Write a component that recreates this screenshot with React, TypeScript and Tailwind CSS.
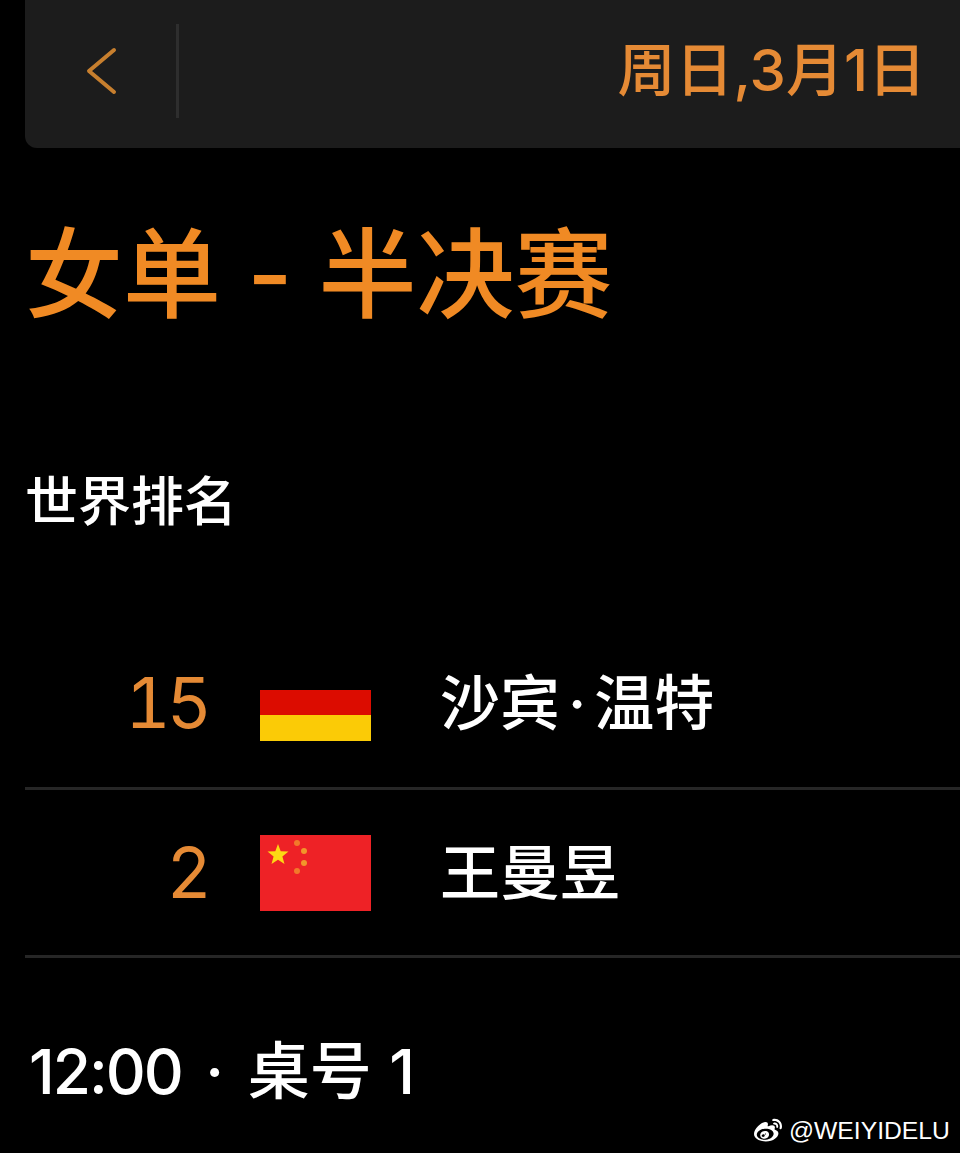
import { FaWeibo } from "react-icons/fa";

const FONT = "font-['Inter','Noto_Sans_CJK_SC',sans-serif]";

const GermanFlag = () => (
    <div className="flex h-[76px] w-[111px] flex-col">
        <div className="h-[25px] bg-black" />
        <div className="h-[25px] bg-[#dc0c00]" />
        <div className="flex-1 bg-[#fbcb06]" />
    </div>
);

const ChinaFlag = () => (
    <svg viewBox="0 0 111 76" className="h-[76px] w-[111px]">
        <rect width="111" height="76" fill="#ee2226" />
        <polygon
            points="18,9 20.7,16.3 28.5,16.6 22.4,21.5 24.5,29 18,24.7 11.5,29 13.6,21.5 7.5,16.6 15.3,16.3"
            fill="#fcd914"
        />
        <circle cx="37" cy="8" r="3" fill="#f2792a" />
        <circle cx="44" cy="16" r="3" fill="#f2952a" />
        <circle cx="44" cy="28" r="3" fill="#f2952a" />
        <circle cx="37" cy="36" r="3" fill="#f2792a" />
    </svg>
);

const PlayerRow = ({
    rank,
    name,
    flag,
    className,
}: {
    rank: string;
    name: React.ReactNode;
    flag: React.ReactNode;
    className: string;
}) => (
    <div className={`flex items-center border-b-[3px] border-[#262626] ${className}`}>
        <div className="w-[183px] text-right text-[70px] leading-none tabular-nums tracking-[-4px] text-[#e58a35]">
            {rank}
        </div>
        <div className="ml-[52px] flex w-[111px] justify-center">{flag}</div>
        <div className="ml-[69px] text-[60px] font-medium leading-none text-white">{name}</div>
    </div>
);

export default function App() {
    return (
        <div className={`relative h-[1153px] w-[960px] overflow-hidden bg-black pl-[25px] ${FONT}`}>
            <header className="flex h-[148px] items-center rounded-bl-xl bg-[#1c1c1c] pb-[6px] pr-[34px]">
                <div className="flex h-[94px] w-[154px] items-center border-r-[3px] border-[#2e2e2e] pl-[60px]">
                    <svg viewBox="0 0 32 48" className="h-[48px] w-[32px]" fill="none">
                        <path
                            d="M29 3 L4 24 L29 45"
                            stroke="#c77f2e"
                            strokeWidth="4"
                            strokeLinecap="round"
                            strokeLinejoin="round"
                        />
                    </svg>
                </div>
                <div className="mb-[2px] ml-auto text-[58px] font-medium leading-none text-[#e58a35]">
                    周日,3月1日
                </div>
            </header>

            <h1 className="mt-[67px] text-[98px] font-medium leading-[120px] text-[#f08a24]">
                女单 - 半决赛
            </h1>

            <div className="mt-[137px] text-[53px] font-medium leading-[60px] text-white">世界排名</div>

            <PlayerRow
                className="mt-[87px] h-[171px]"
                rank="15"
                name={
                    <>
                        沙宾<span className="mx-[8px]">·</span>温特
                    </>
                }
                flag={<GermanFlag />}
            />
            <PlayerRow
                className="h-[168px]"
                rank="2"
                name="王曼昱"
                flag={<ChinaFlag />}
            />

            <div className="mt-[78px] pl-[4px] text-[62px] font-medium leading-[72px] text-white [word-spacing:5px]">
                <span className="tracking-[-2px]">12:00</span> <span className="mx-[2px]">·</span>{" "}
                <span className="[word-spacing:1px]">桌号 1</span>
            </div>

            <div className="absolute left-[752px] top-[1116px] flex items-center gap-[5px] text-[24.7px] leading-[30px] text-white">
                <FaWeibo className="h-[28px] w-[32px]" />
                <span className="font-['Liberation_Sans',sans-serif]">@WEIYIDELU</span>
            </div>
        </div>
    );
}
